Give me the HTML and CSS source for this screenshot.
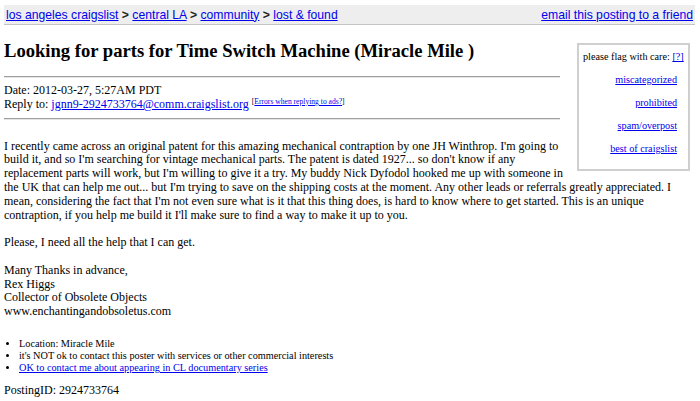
FILE: index.html
```html
<!DOCTYPE html>
<html>
<head>
<meta charset="utf-8">
<title>Looking for parts for Time Switch Machine (Miracle Mile )</title>
<link rel="stylesheet" href="styles.css">
</head>
<body>
<div class="bchead">
  <div class="crumbs"><a href="#">los angeles craigslist</a> <b>&gt;</b> <a href="#">central LA</a> <b>&gt;</b> <a href="#">community</a> <b>&gt;</b> <a href="#">lost &amp; found</a></div>
  <a class="email" href="#">email this posting to a friend</a>
</div>
<div class="flags">
  <div class="flag-head">please flag with care: <a href="#">[?]</a></div>
  <a href="#">miscategorized</a>
  <a href="#">prohibited</a>
  <a href="#">spam/overpost</a>
  <a href="#">best of craigslist</a>
</div>
<h2 class="title">Looking for parts for Time Switch Machine (Miracle Mile )</h2>
<hr class="rule">
<div class="meta">Date: 2012-03-27, 5:27AM PDT<br>Reply to: <a href="#">jgnn9-2924733764@comm.craigslist.org</a> <span class="errors">[<a href="#">Errors when replying to ads?</a>]</span></div>
<hr class="rule rule-low">
<div class="userbody">I recently came across an original patent for this amazing mechanical contraption by one JH Winthrop. I'm going to build it, and so I'm searching for vintage mechanical parts. The patent is dated 1927... so don't know if any replacement parts will work, but I'm willing to give it a try. My buddy Nick Dyfodol hooked me up with someone in the UK that can help me out... but I'm trying to save on the shipping costs at the moment. Any other leads or referrals greatly appreciated. I mean, considering the fact that I'm not even sure what is it that this thing does, is hard to know where to get started. This is an unique contraption, if you help me build it I'll make sure to find a way to make it up to you.<br><br>Please, I need all the help that I can get.<br><br>Many Thanks in advance,<br>Rex Higgs<br>Collector of Obsolete Objects<br>www.enchantingandobsoletus.com</div>
<ul class="blurbs">
  <li>Location: Miracle Mile</li>
  <li>it's NOT ok to contact this poster with services or other commercial interests</li>
  <li><a href="#">OK to contact me about appearing in CL documentary series</a></li>
</ul>
<div class="pid">PostingID: 2924733764</div>
</body>
</html>
```
FILE: styles.css
```css
body {
  margin: 5px 5px 0 4px;
  font-family: "Liberation Serif", "Times New Roman", serif;
  font-size: 12px;
  line-height: 13.8px;
  color: #000;
  background: #fff;
}

a {
  color: #0000ee;
  text-decoration: underline;
}

.bchead {
  display: flex;
  justify-content: space-between;
  align-items: center;
  height: 19px;
  padding: 0 2px;
  background: #eeeeee;
  border-bottom: 1px solid #c4c4c4;
  font-family: "Liberation Sans", Arial, sans-serif;
  font-size: 12.2px;
  line-height: 14px;
}

.crumbs b {
  font-weight: bold;
  color: #222;
}

.flags {
  float: right;
  box-sizing: border-box;
  width: 113px;
  margin: 18px 5px 8px 6px;
  padding: 6px 4px 14px 4px;
  border: 2px solid #cfcfcf;
  display: flex;
  flex-direction: column;
  align-items: flex-end;
  gap: 11.5px;
  font-size: 10.2px;
  line-height: 11.5px;
  white-space: nowrap;
}

.flags > a {
  margin-right: 7px;
}

.flag-head {
  align-self: stretch;
  text-align: left;
}

.title {
  margin: 15px 0 0;
  font-size: 18.6px;
  line-height: 21px;
  font-weight: bold;
}

.rule {
  height: 0;
  overflow: visible;
  margin: 15px 135px 0 0;
  border: 0;
  border-top: 1px solid #a0a0a0;
  border-bottom: 1px solid #e4e4e4;
}

.rule-low {
  margin-top: 6px;
}

.meta {
  margin: 6px 0 0;
}

.errors {
  font-size: 7.6px;
  line-height: 8px;
  vertical-align: top;
}

.userbody {
  margin-top: 20px;
}

.blurbs {
  margin: 19px 0 0;
  padding-left: 15px;
  font-size: 10.25px;
  line-height: 12px;
  list-style: disc;
}

.pid {
  margin-top: 10px;
}
```
